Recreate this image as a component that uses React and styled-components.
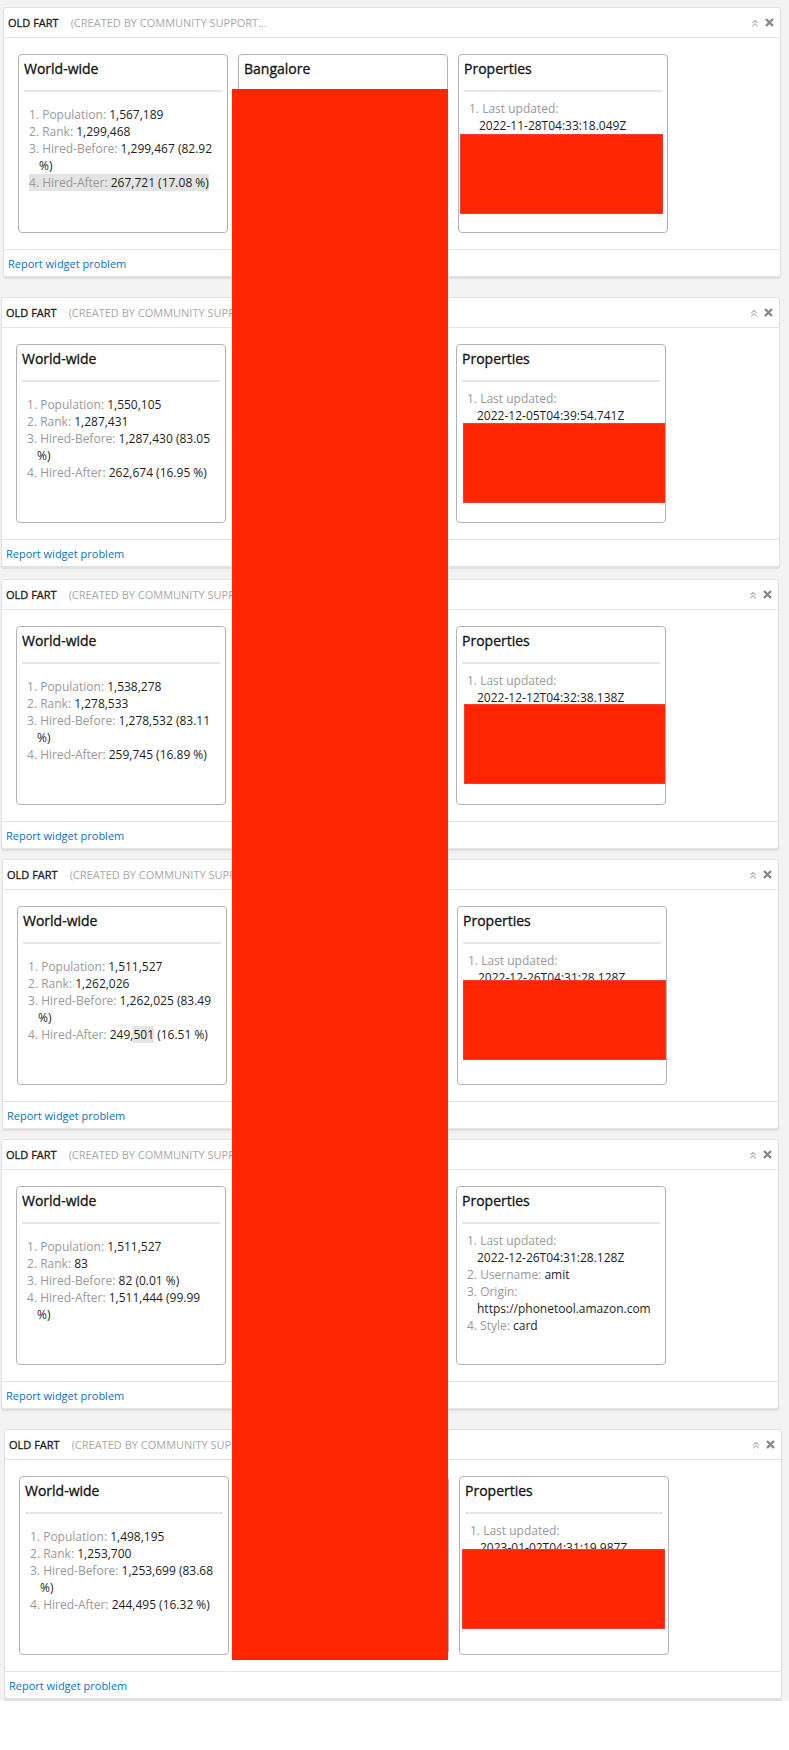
import React from 'react'
import styled, { createGlobalStyle } from 'styled-components'

const GlobalStyle = createGlobalStyle`
  body {
    margin: 0;
    background: #fff;
    font-family: "Open Sans", "Liberation Sans", sans-serif;
  }
  * { box-sizing: border-box; }
`

const Page = styled.div`
  position: relative;
  width: 789px;
  padding-bottom: 2px;
  background: #f3f3f3;
  display: flex;
  flex-direction: column;
`
const Widget = styled.section`
  margin-top: ${({$gap}) => $gap}px;
  margin-left: ${({$left}) => $left}px;
  width: ${({$width}) => $width}px;
  background: #fff;
  border: 1px solid #e2e2e2;
  border-radius: 3px;
  box-shadow: 0 2px 1px rgba(0, 0, 0, 0.08);
  display: flex;
  flex-direction: column;
`
const Header = styled.header`
  height: 30px;
  display: flex;
  align-items: center;
  padding: 0 6px 0 4px;
  border-bottom: 1px solid #e4e4e4;
  font-size: 11px;
`
const Owner = styled.span`
  color: #1a1a1a;
  -webkit-text-stroke: 0.3px #1a1a1a;
`
const Creator = styled.span`
  margin-left: 12px;
  color: #a8a8a8;
`
const Tools = styled.div`
  margin-left: auto;
  display: flex;
  align-items: center;
  gap: 6px;
`
const Body = styled.div`
  display: flex;
  gap: 10px;
  padding: 16px 0 16px 14px;
`
const Card = styled.div`
  position: relative;
  width: 210px;
  height: 179px;
  border: 1px solid #b3b3b3;
  border-radius: 4px;
  padding: 4px 5px 0;
  background: #fff;
  overflow: hidden;
`
const CardTitle = styled.h3`
  margin: 0;
  font-size: 14px;
  font-weight: 400;
  line-height: 20px;
  color: #111;
  -webkit-text-stroke: 0.3px #111;
  padding-bottom: 11px;
  border-bottom: 2px solid #e6e6e6;
`
const List = styled.ol`
  list-style: none;
  margin: ${({$tight}) => ($tight ? 8 : 14)}px 0 0;
  padding: 0 8px 0 5px;
  font-size: 12px;
  line-height: 17px;
  color: #1e1e1e;
`
const Item = styled.li`
  padding-left: 10px;
  text-indent: -10px;
`
const Label = styled.span`
  color: #999;
`
const Whole = styled.span`
  white-space: nowrap;
`
const Mark = styled.span`
  background: #e4e4e4;
`
const Redact = styled.div`
  position: absolute;
  top: ${({$top}) => $top}px;
  left: ${({$left}) => $left}px;
  width: 203px;
  height: 80px;
  background: #ff2500;
  border: 1px solid #f0402f;
`
const Footer = styled.footer`
  height: 27px;
  display: flex;
  align-items: center;
  padding-left: 4px;
  border-top: 1px solid #e4e4e4;
`
const ReportLink = styled.a`
  font-size: 11px;
  color: #0a72c0;
  text-decoration: none;
`
const RedactBar = styled.div`
  position: absolute;
  left: 232px;
  top: 89px;
  width: 216px;
  height: 1571px;
  background: #ff2500;
`

const CollapseIcon = () => (
  <svg width="8" height="8" viewBox="0 0 8 8">
    <path d="M1.2 4.2 L4 1.4 L6.8 4.2 M1.2 7.4 L4 4.6 L6.8 7.4" fill="none" stroke="#b8b8b8" strokeWidth="1.2" />
  </svg>
)

const CloseIcon = () => (
  <svg width="9" height="9" viewBox="0 0 9 9">
    <path d="M1.6 1.6 L7.4 7.4 M7.4 1.6 L1.6 7.4" stroke="#888" strokeWidth="2.2" strokeLinecap="round" />
  </svg>
)

const widgets = [
  {
    gap: 7, left: 3, width: 778,
    world: ['1,567,189', '1,299,468', '1,299,467 (82.92 %)', '267,721 (17.08 %)'],
    markRow: true,
    date: '2022-11-28T04:33:18.049Z',
    redact: {top: 79, left: 1},
  },
  {
    gap: 20, left: 1, width: 779,
    world: ['1,550,105', '1,287,431', '1,287,430 (83.05 %)', '262,674 (16.95 %)'],
    date: '2022-12-05T04:39:54.741Z',
    redact: {top: 78, left: 6},
  },
  {
    gap: 12, left: 1, width: 778,
    world: ['1,538,278', '1,278,533', '1,278,532 (83.11 %)', '259,745 (16.89 %)'],
    date: '2022-12-12T04:32:38.138Z',
    redact: {top: 77, left: 7},
  },
  {
    gap: 10, left: 2, width: 777,
    world: ['1,511,527', '1,262,026', '1,262,025 (83.49 %)', ['249,', '501', ' (16.51 %)']],
    date: '2022-12-26T04:31:28.128Z',
    redact: {top: 73, left: 5},
  },
  {
    gap: 10, left: 1, width: 778,
    world: ['1,511,527', '83', '82 (0.01 %)', '1,511,444 (99.99 %)'],
    date: '2022-12-26T04:31:28.128Z',
  },
  {
    gap: 20, left: 4, width: 778,
    world: ['1,498,195', '1,253,700', '1,253,699 (83.68 %)', '244,495 (16.32 %)'],
    date: '2023-01-02T04:31:19.987Z',
    redact: {top: 72, left: 2},
  },
]

const labels = ['Population', 'Rank', 'Hired-Before', 'Hired-After']

const Value = ({value}) =>
  Array.isArray(value) ? (
    <>
      {value[0]}
      <Mark>{value[1]}</Mark>
      {value[2]}
    </>
  ) : (
    value
  )

const WorldCard = ({values, markRow}) => (
  <Card>
    <CardTitle>World-wide</CardTitle>
    <List>
      {values.map((v, i) => {
        const row = (
          <>
            <Label>{i + 1}. {labels[i]}:</Label> <Value value={v} />
          </>
        )
        return <Item key={i}>{markRow && i === 3 ? <Mark>{row}</Mark> : row}</Item>
      })}
    </List>
  </Card>
)

const PropertiesCard = ({date, redact}) => (
  <Card>
    <CardTitle>Properties</CardTitle>
    <List $tight>
      <Item><Label>1. Last updated:</Label> <Whole>{date}</Whole></Item>
      <Item><Label>2. Username:</Label> amit</Item>
      <Item><Label>3. Origin:</Label> <Whole>https://phonetool.amazon.com</Whole></Item>
      <Item><Label>4. Style:</Label> card</Item>
    </List>
    {redact && <Redact $top={redact.top} $left={redact.left} />}
  </Card>
)

const App = () => {
  return (
    <Page>
      <GlobalStyle />
      {widgets.map((w, i) => (
        <Widget key={i} $gap={w.gap} $left={w.left} $width={w.width}>
          <Header>
            <Owner>OLD FART</Owner>
            <Creator>(CREATED BY COMMUNITY SUPPORT...</Creator>
            <Tools>
              <CollapseIcon />
              <CloseIcon />
            </Tools>
          </Header>
          <Body>
            <WorldCard values={w.world} markRow={w.markRow} />
            <Card>
              <CardTitle>Bangalore</CardTitle>
            </Card>
            <PropertiesCard date={w.date} redact={w.redact} />
          </Body>
          <Footer>
            <ReportLink href="#">Report widget problem</ReportLink>
          </Footer>
        </Widget>
      ))}
      <RedactBar />
    </Page>
  )
}

export default App
